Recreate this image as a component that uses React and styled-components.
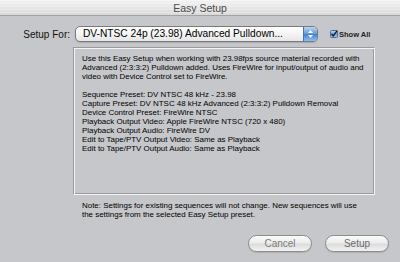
import React from "react";
import styled, { createGlobalStyle } from "styled-components";

const GlobalStyle = createGlobalStyle`
  html, body {
    margin: 0;
    padding: 0;
    background: #c6c7ca;
  }
  body {
    font-family: "Liberation Sans", Arial, sans-serif;
  }
`;

const Window = styled.div`
  width: 400px;
  height: 262px;
  display: flex;
  flex-direction: column;
  background: #c6c7ca;
  overflow: hidden;
`;

const TitleBar = styled.div`
  height: 15px;
  display: flex;
  justify-content: center;
  align-items: center;
  background: repeating-linear-gradient(
      to bottom,
      rgba(255, 255, 255, 0.25) 0,
      rgba(255, 255, 255, 0.25) 1px,
      rgba(0, 0, 0, 0) 1px,
      rgba(0, 0, 0, 0) 3px
    ),
    linear-gradient(to bottom, #f3f3f3, #d9d9d9);
  border-bottom: 1px solid #a3a3a3;
  color: #4b4b4b;
  font-size: 10.5px;
`;

const Body = styled.div`
  flex: 1;
  display: flex;
  flex-direction: column;
  padding: 10px 0 0 0;
`;

const SetupRow = styled.div`
  display: flex;
  align-items: center;
  height: 16px;
`;

const Label = styled.div`
  width: 70px;
  text-align: right;
  margin-right: 5px;
  font-size: 10px;
  color: #111;
`;

const Popup = styled.div`
  width: 243px;
  height: 16px;
  box-sizing: border-box;
  display: flex;
  border: 1px solid #7a7a7a;
  border-radius: 5px;
  overflow: hidden;
  background: linear-gradient(to bottom, #ffffff, #f4f4f4 50%, #e6e6e6);
  box-shadow: 0 1px 1px rgba(0, 0, 0, 0.15);
`;

const PopupText = styled.div`
  flex: 1;
  padding-left: 7px;
  font-size: 10.2px;
  line-height: 14px;
  color: #000;
  white-space: nowrap;
`;

const PopupArrows = styled.div`
  width: 13px;
  display: flex;
  align-items: center;
  justify-content: center;
  background: linear-gradient(to bottom, #b9d4f2, #5f98de 50%, #3f7fd3 51%, #8cc0f5);
  border-left: 1px solid #4f73a8;
`;

const ShowAll = styled.label`
  display: flex;
  align-items: center;
  gap: 1px;
  margin-left: 12px;
  font-size: 7.5px;
  font-weight: bold;
  color: #222;
`;

const InfoBox = styled.div`
  margin: 5px 0 0 73px;
  width: 302px;
  height: 148px;
  box-sizing: border-box;
  border-top: 1px solid #9a9a9c;
  border-left: 1px solid #9a9a9c;
  border-right: 1px solid #f4f4f4;
  border-bottom: 1px solid #f4f4f4;
  box-shadow: inset 1px 1px 0 #f4f4f4, inset -1px -1px 0 #9a9a9c;
  padding: 6px 0 0 8px;
`;

const InfoText = styled.div`
  font-size: 7.95px;
  line-height: 9px;
  color: #000;
  white-space: nowrap;
  min-height: 9px;
`;

const Note = styled.div`
  margin: 6px 0 0 82px;
  font-size: 7.95px;
  line-height: 9px;
  color: #000;
  white-space: nowrap;
`;

const ButtonRow = styled.div`
  display: flex;
  justify-content: flex-end;
  gap: 13px;
  padding-right: 11px;
  margin-top: 16px;
`;

const Button = styled.div`
  width: 64px;
  height: 17px;
  box-sizing: border-box;
  display: flex;
  align-items: center;
  justify-content: center;
  border: 1px solid #8c8c8c;
  border-radius: 9px;
  background: linear-gradient(to bottom, #fbfbfb, #ececec 45%, #dcdcdc 55%, #f2f2f2);
  box-shadow: 0 1px 1px rgba(0, 0, 0, 0.12);
  color: ${(p) => (p.dim ? "#7b7b7b" : "#6a6a6a")};
  font-size: 10px;
`;

const infoLines = [
  "Use this Easy Setup when working with 23.98fps source material recorded with",
  "Advanced (2:3:3:2) Pulldown added. Uses FireWire for input/output of audio and",
  "video with Device Control set to FireWire.",
  "",
  "Sequence Preset: DV NTSC 48 kHz - 23.98",
  "Capture Preset: DV NTSC 48 kHz Advanced (2:3:3:2) Pulldown Removal",
  "Device Control Preset: FireWire NTSC",
  "Playback Output Video: Apple FireWire NTSC (720 x 480)",
  "Playback Output Audio: FireWire DV",
  "Edit to Tape/PTV Output Video: Same as Playback",
  "Edit to Tape/PTV Output Audio: Same as Playback",
];

const Checkbox = () => (
  <svg width="8" height="8" viewBox="0 0 8 8">
    <defs>
      <linearGradient id="cb" x1="0" y1="0" x2="0" y2="1">
        <stop offset="0" stopColor="#c3dcf7" />
        <stop offset="0.5" stopColor="#6aa2e4" />
        <stop offset="1" stopColor="#9fcaf5" />
      </linearGradient>
    </defs>
    <rect x="0.5" y="0.5" width="7" height="7" rx="1" fill="url(#cb)" stroke="#4a6f9f" />
    <path d="M1.6 4 L3.2 6 L7.2 0.6" fill="none" stroke="#1b1b1b" strokeWidth="1.3" />
  </svg>
);

const Arrows = () => (
  <svg width="7" height="10" viewBox="0 0 7 10">
    <path d="M3.5 1 L6 4 L1 4 Z" fill="#fff" />
    <path d="M3.5 9 L6 6 L1 6 Z" fill="#fff" />
  </svg>
);

const App = () => {
  return (
    <Window>
      <GlobalStyle />
      <TitleBar>Easy Setup</TitleBar>
      <Body>
        <SetupRow>
          <Label>Setup For:</Label>
          <Popup>
            <PopupText>DV-NTSC 24p (23.98) Advanced Pulldown...</PopupText>
            <PopupArrows>
              <Arrows />
            </PopupArrows>
          </Popup>
          <ShowAll>
            <Checkbox />
            Show All
          </ShowAll>
        </SetupRow>
        <InfoBox>
          {infoLines.map((line, i) => (
            <InfoText key={i}>{line}</InfoText>
          ))}
        </InfoBox>
        <Note>
          Note: Settings for existing sequences will not change. New sequences will use
          <br />
          the settings from the selected Easy Setup preset.
        </Note>
        <ButtonRow>
          <Button dim>Cancel</Button>
          <Button>Setup</Button>
        </ButtonRow>
      </Body>
    </Window>
  );
};

export default App;
